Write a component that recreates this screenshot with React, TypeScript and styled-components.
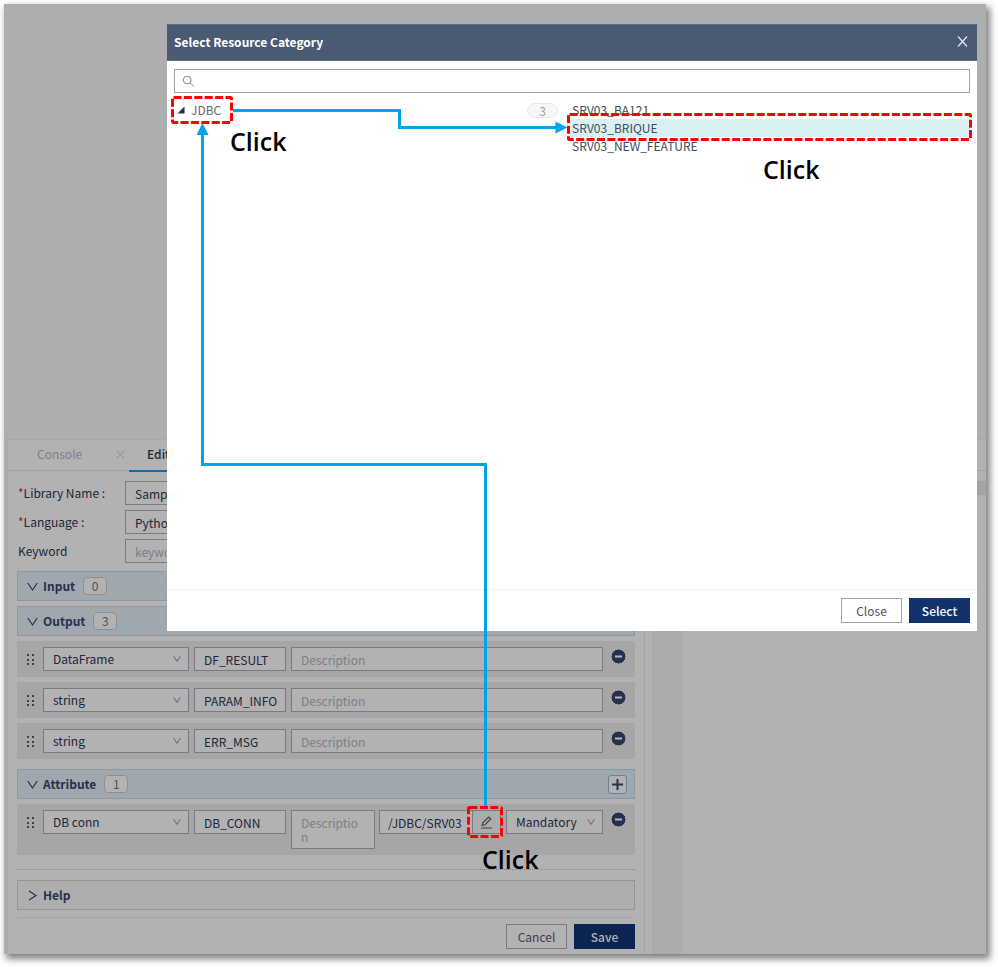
import React from "react";
import styled, { createGlobalStyle } from "styled-components";

const ink = "#202637";
const line = "#777b86";

const GlobalStyle = createGlobalStyle`
  *, *::before, *::after { box-sizing: border-box; }
  body { margin: 0; background: #fff; }
  body, button, input, select, textarea {
    font-family: "Noto Sans CJK KR", "Noto Sans", sans-serif;
    font-size: 12px;
    line-height: 18px;
    color: ${ink};
  }
  button { cursor: pointer; }
`;

const Page = styled.div`
  display: flex;
  min-height: 100vh;
  padding: 4px 12px 13px 4px;
`;

const Frame = styled.div`
  position: relative;
  flex: 1;
  display: flex;
  flex-direction: column;
  min-width: 0;
  background: #aeaeae;
  box-shadow: 3px 4px 7px 1px rgba(0, 0, 0, 0.5);
`;

const Canvas = styled.div`
  flex: 1;
  min-height: 435px;
`;

const Dock = styled.section`
  margin-left: 3px;
  background: #b2b2b2;
  border-top: 1px solid #a8a8a8;
  border-left: 1px solid #a8a8a8;
`;

const TabBar = styled.div`
  display: flex;
  height: 31px;
  border-bottom: 1px solid #a2a2a2;
`;

const Tab = styled.button<{ $active?: boolean }>`
  display: flex;
  align-items: center;
  justify-content: space-between;
  height: 32px;
  width: 121px;
  padding: 0 4px ${(p) => (p.$active ? 2 : 4)}px ${(p) => (p.$active ? 18 : 29)}px;
  border: 0;
  border-bottom: ${(p) => (p.$active ? "2px solid #0b6cb0" : "0")};
  background: none;
  font-weight: ${(p) => (p.$active ? 500 : 400)};
  color: ${(p) => (p.$active ? ink : "#7a808b")};
`;

const DockBody = styled.div`
  display: flex;
  align-items: stretch;
`;

const Editor = styled.div`
  flex: 0 0 637px;
  min-width: 0;
  padding: 10px 9px 5px 9px;
  border-right: 1px solid #a4a4a4;
`;

const Strip = styled.div`
  flex: 0 0 30px;
  margin-left: 7px;
  background: #ababab;
`;

const Side = styled.div`
  flex: 1;
  padding-top: 10px;
`;

const SideBar = styled.div`
  height: 14px;
  background: #a4a4a4;
`;

const Form = styled.div`
  display: flex;
  flex-direction: column;
  gap: 5px;
  margin-bottom: 8px;
`;

const FormRow = styled.div`
  display: flex;
  align-items: center;
`;

const Label = styled.label`
  flex: 0 0 108px;
  padding-left: 1px;
`;

const Star = styled.span`
  color: #a3142a;
`;

const Field = styled.input`
  flex: 1;
  min-width: 0;
  height: 24px;
  padding: 0 6px 0 9px;
  border: 1px solid ${line};
  border-radius: 0;
  background: #b2b2b2;
  outline: 0;
  &::placeholder { color: #7c7f87; opacity: 1; }
`;

const NameField = styled(Field)`
  flex: 0 0 92px;
`;

const PathField = styled(Field)`
  padding: 0 0 0 8px;
  border-right: 0;
`;

const Area = styled.textarea`
  flex: 0 0 84px;
  min-width: 0;
  height: 39px;
  padding: 5px 9px;
  border: 1px solid ${line};
  background: #b2b2b2;
  line-height: 14px;
  word-break: break-all;
  resize: none;
  outline: 0;
  overflow: hidden;
  &::placeholder { color: #7c7f87; opacity: 1; }
`;

const SelectBox = styled.span<{ $width: number }>`
  position: relative;
  flex: 0 0 ${(p) => p.$width}px;
  svg {
    position: absolute;
    right: 8px;
    top: 8px;
    pointer-events: none;
  }
`;

const Select = styled.select`
  display: block;
  width: 100%;
  height: 24px;
  padding: 0 9px;
  border: 1px solid ${line};
  border-radius: 0;
  background: #b2b2b2;
  appearance: none;
  outline: 0;
`;

const Section = styled.div<{ $plain?: boolean }>`
  display: flex;
  align-items: center;
  height: 30px;
  margin-bottom: 5px;
  padding: 0 7px 0 9px;
  border: 1px solid ${(p) => (p.$plain ? "#9295a0" : "#8c97a6")};
  background: ${(p) => (p.$plain ? "#aeaeae" : "#a0a8af")};
`;

const SectionToggle = styled.button`
  display: flex;
  align-items: center;
  gap: 5px;
  padding: 0;
  border: 0;
  background: none;
  font-weight: 700;
  color: #27304d;
`;

const Count = styled.span`
  min-width: 24px;
  height: 18px;
  margin-left: 8px;
  border: 1px solid #8f8f8f;
  border-radius: 4px;
  background: #b2b2b2;
  line-height: 16px;
  text-align: center;
  color: #4b5060;
`;

const AddButton = styled.button`
  display: flex;
  align-items: center;
  justify-content: center;
  width: 19px;
  height: 19px;
  margin-left: auto;
  padding: 0;
  border: 1px solid #6b8199;
  border-radius: 3px;
  background: #b2b2b2;
  color: #27304d;
`;

const Rows = styled.div`
  display: flex;
  flex-direction: column;
  gap: 5px;
  margin-bottom: 10px;
`;

const Row = styled.div`
  display: flex;
  align-items: flex-start;
  gap: 5px;
  padding: 6px 8px 6px 10px;
  background: #a6a6a6;
`;

const Grip = styled.svg`
  flex: 0 0 11px;
  height: 24px;
`;

const PathGroup = styled.span`
  display: flex;
  flex: 1;
  min-width: 0;
  margin-left: -1px;
`;

const EditButton = styled.button`
  display: flex;
  align-items: center;
  justify-content: center;
  flex: 0 0 29px;
  height: 24px;
  padding: 0;
  border: 1px solid ${line};
  background: #acacac;
`;

const RemoveButton = styled.button`
  flex: 0 0 17px;
  height: 17px;
  margin: 1px 0 0 2px;
  padding: 0;
  border: 0;
  background: none;
  svg { display: block; }
`;

const Divider = styled.hr<{ $dotted?: boolean }>`
  margin: ${(p) => (p.$dotted ? "14px 0 10px" : "7px 0 6px")};
  border: 0;
  border-top: 1px ${(p) => (p.$dotted ? "dotted #858585" : "solid #a5a5a5")};
`;

const Actions = styled.div`
  display: flex;
  justify-content: flex-end;
  gap: 7px;
`;

const ActionButton = styled.button<{ $kind: "dimPlain" | "dimPrimary" | "plain" | "primary" }>`
  width: 61px;
  height: 25px;
  padding: 0;
  border: 1px solid;
  ${(p) =>
    ({
      dimPlain: `border-color: ${line}; background: #b2b2b2; color: #3b4050;`,
      dimPrimary: "border-color: #0c2450; background: #0c2450; color: #b2b2b2; font-weight: 500;",
      plain: "border-color: #9ba1ae; background: #fff; color: #4a5263;",
      primary: "border-color: #12326b; background: #12326b; color: #fff; font-weight: 500;",
    })[p.$kind]}
`;

const Modal = styled.div`
  position: absolute;
  top: 20px;
  left: 163px;
  right: 9px;
  display: flex;
  flex-direction: column;
  height: 607px;
  background: #fff;
`;

const ModalHeader = styled.header`
  display: flex;
  align-items: center;
  justify-content: space-between;
  height: 37px;
  padding: 0 9px 2px 7px;
  border: 1px solid #5f6e87;
  border-width: 1px 0;
  background: #4a5a72;
`;

const ModalTitle = styled.h2`
  margin: 0;
  font-size: 12px;
  line-height: 18px;
  font-weight: 700;
  color: #fff;
`;

const CloseIconButton = styled.button`
  display: flex;
  padding: 0;
  border: 0;
  background: none;
  color: #e6e9ee;
`;

const SearchBox = styled.label`
  display: flex;
  align-items: center;
  gap: 6px;
  height: 24px;
  margin: 8px 7px 8px;
  padding: 0 7px;
  border: 1px solid #9ba1ae;
`;

const SearchInput = styled.input`
  flex: 1;
  min-width: 0;
  border: 0;
  padding: 0;
  outline: 0;
  background: none;
`;

const Columns = styled.div`
  flex: 1;
  display: grid;
  grid-template-columns: 33fr 34fr;
  gap: 8px;
  padding: 0 7px;
  align-items: start;
`;

const TreeNode = styled.button`
  display: flex;
  align-items: center;
  width: 100%;
  height: 18px;
  padding: 0 4px 0 3px;
  border: 0;
  background: none;
  color: #64676e;
`;

const NodeName = styled.span`
  flex: 1;
  margin-left: 6px;
  text-align: left;
`;

const Pill = styled.span`
  width: 31px;
  height: 15px;
  border: 1px solid #e8e8e8;
  border-radius: 8px;
  background: #f7f7f7;
  line-height: 13px;
  text-align: center;
  color: #9a9fa8;
`;

const Items = styled.ul`
  margin: 0;
  padding: 0;
  list-style: none;
`;

const Item = styled.li<{ $selected?: boolean }>`
  height: 18px;
  padding-left: 2px;
  background: ${(p) => (p.$selected ? "#d8f0f2" : "none")};
  line-height: 18px;
  color: #434b5c;
`;

const ModalFooter = styled.footer`
  padding: 8px 7px;
  border-top: 1px solid #f0f0f0;
`;

const Overlay = styled.svg`
  position: absolute;
  top: -4px;
  left: -4px;
  pointer-events: none;
`;

const Callout = styled.span<{ $x: number; $y: number }>`
  position: absolute;
  left: ${(p) => p.$x}px;
  top: ${(p) => p.$y}px;
  font-family: "Open Sans", "Noto Sans", sans-serif;
  font-size: 25px;
  line-height: 32px;
  font-weight: 600;
  color: #000;
`;

const Chevron = () => (
  <svg width="8" height="8" viewBox="0 0 10 10" fill="none" stroke="#6c6f78" strokeWidth="1.3">
    <path d="M0.8 1.5 5 8 9.2 1.5" />
  </svg>
);

const SectionIcon = ({ closed }: { closed?: boolean }) => (
  <svg width="11" height="11" viewBox="0 0 11 11" fill="none" stroke="#27304d" strokeWidth="1.2">
    <path d={closed ? "M2 1 9 5.5 2 10" : "M0.8 2 5.5 9 10.2 2"} />
  </svg>
);

const GripIcon = () => (
  <Grip viewBox="0 0 11 24" fill="#3c3f47">
    {[7, 12, 16].map((y) => (
      <React.Fragment key={y}>
        <rect x="0" y={y} width="2" height="2" />
        <rect x="5" y={y} width="2" height="2" />
      </React.Fragment>
    ))}
  </Grip>
);

const Remove = () => (
  <RemoveButton aria-label="Remove">
    <svg width="17" height="17" viewBox="0 0 17 17">
      <circle cx="8.5" cy="8.5" r="7.5" fill="#27304d" stroke="#b4b4b4" />
      <path d="M5 8.5h7" stroke="#b8b8b8" strokeWidth="2" />
    </svg>
  </RemoveButton>
);

const DropDown = ({ value, width, label }: { value: string; width: number; label: string }) => (
  <SelectBox $width={width}>
    <Select aria-label={label} defaultValue={value}>
      <option>{value}</option>
    </Select>
    <Chevron />
  </SelectBox>
);

const SectionHeader = ({ name, count, add }: { name: string; count: number; add?: boolean }) => (
  <Section>
    <SectionToggle aria-expanded>
      <SectionIcon />
      {name}
    </SectionToggle>
    <Count>{count}</Count>
    {add && (
      <AddButton aria-label="Add attribute">
        <svg width="11" height="11" viewBox="0 0 11 11" stroke="currentColor" strokeWidth="2">
          <path d="M5.5 0v11M0 5.5h11" />
        </svg>
      </AddButton>
    )}
  </Section>
);

const outputs = [
  { type: "DataFrame", name: "DF_RESULT" },
  { type: "string", name: "PARAM_INFO" },
  { type: "string", name: "ERR_MSG" },
];

const resources = ["SRV03_BA121", "SRV03_BRIQUE", "SRV03_NEW_FEATURE"];

export default function App() {
  return (
    <Page>
      <GlobalStyle />
      <Frame>
        <Canvas />
        <Dock>
          <TabBar>
            <Tab>
              Console
              <svg width="9" height="9" viewBox="0 0 9 9" stroke="#888c94">
                <path d="M0.5 0.5l8 8M8.5 0.5l-8 8" />
              </svg>
            </Tab>
            <Tab $active>Edit</Tab>
          </TabBar>
          <DockBody>
            <Editor>
              <Form>
                <FormRow>
                  <Label htmlFor="library"><Star>*</Star>Library Name :</Label>
                  <Field id="library" defaultValue="Sample" />
                </FormRow>
                <FormRow>
                  <Label htmlFor="language"><Star>*</Star>Language :</Label>
                  <Field id="language" defaultValue="Python" />
                </FormRow>
                <FormRow>
                  <Label htmlFor="keyword">Keyword</Label>
                  <Field id="keyword" placeholder="keyword" />
                </FormRow>
              </Form>
              <SectionHeader name="Input" count={0} />
              <SectionHeader name="Output" count={3} />
              <Rows>
                {outputs.map((o) => (
                  <Row key={o.name}>
                    <GripIcon />
                    <DropDown value={o.type} width={146} label="Type" />
                    <NameField aria-label="Name" defaultValue={o.name} />
                    <Field aria-label="Description" placeholder="Description" />
                    <Remove />
                  </Row>
                ))}
              </Rows>
              <SectionHeader name="Attribute" count={1} add />
              <Row>
                <GripIcon />
                <DropDown value="DB conn" width={146} label="Type" />
                <NameField aria-label="Name" defaultValue="DB_CONN" />
                <Area aria-label="Description" placeholder="Description" />
                <PathGroup>
                  <PathField aria-label="Resource path" defaultValue="/JDBC/SRV03" />
                  <EditButton aria-label="Edit resource">
                    <svg width="13" height="13" viewBox="0 0 13 13" fill="none" stroke="#3c404b" strokeWidth="1.2">
                      <path d="M1 12h11M2.2 9.5l.6-2.7L8.7 1l2 2-5.8 5.8z" />
                    </svg>
                  </EditButton>
                </PathGroup>
                <DropDown value="Mandatory" width={97} label="Requirement" />
                <Remove />
              </Row>
              <Divider $dotted />
              <Section $plain>
                <SectionToggle aria-expanded={false}>
                  <SectionIcon closed />
                  Help
                </SectionToggle>
              </Section>
              <Divider />
              <Actions>
                <ActionButton $kind="dimPlain">Cancel</ActionButton>
                <ActionButton $kind="dimPrimary">Save</ActionButton>
              </Actions>
            </Editor>
            <Strip />
            <Side>
              <SideBar />
            </Side>
          </DockBody>
        </Dock>

        <Modal role="dialog" aria-labelledby="modal-title">
          <ModalHeader>
            <ModalTitle id="modal-title">Select Resource Category</ModalTitle>
            <CloseIconButton aria-label="Close dialog">
              <svg width="11" height="11" viewBox="0 0 11 11" stroke="currentColor" strokeWidth="1.2">
                <path d="M1 0.5l9 10M10 0.5l-9 10" />
              </svg>
            </CloseIconButton>
          </ModalHeader>
          <SearchBox>
            <svg width="13" height="13" viewBox="0 0 13 13" fill="none" stroke="#85888e">
              <circle cx="5.2" cy="5" r="3.9" />
              <path d="M8 7.8l4 3.7" />
            </svg>
            <SearchInput type="search" aria-label="Search" />
          </SearchBox>
          <Columns>
            <TreeNode>
              <svg width="8" height="8" viewBox="0 0 8 8">
                <path d="M7.5 0.5v7h-7z" fill="#27304d" />
              </svg>
              <NodeName>JDBC</NodeName>
              <Pill>3</Pill>
            </TreeNode>
            <Items>
              {resources.map((r) => (
                <Item key={r} $selected={r === "SRV03_BRIQUE"}>{r}</Item>
              ))}
            </Items>
          </Columns>
          <ModalFooter>
            <Actions>
              <ActionButton $kind="plain">Close</ActionButton>
              <ActionButton $kind="primary">Select</ActionButton>
            </Actions>
          </ModalFooter>
        </Modal>

        <Overlay width="998" height="963" viewBox="0 0 998 963" fill="none" aria-hidden="true">
          <g stroke="#00a2e8" strokeWidth="3">
            <path d="M233 110.500H399.500V127.500H557" />
            <path d="M485.500 806V464.500H202.500V134" />
          </g>
          <g fill="#00a2e8">
            <path d="M555.500 121.500v12l12-6z" />
            <path d="M196.500 135h12l-6-12z" />
          </g>
          <g stroke="#ff0000" strokeWidth="3" strokeDasharray="8 2.400">
            <rect x="172.500" y="97.500" width="59" height="25" rx="1" />
            <rect x="568.500" y="114.500" width="402" height="25" rx="1" />
            <rect x="468.500" y="807.500" width="33" height="29" rx="1" />
          </g>
        </Overlay>
        <Callout $x={226} $y={121}>Click</Callout>
        <Callout $x={759} $y={149}>Click</Callout>
        <Callout $x={478} $y={839}>Click</Callout>
      </Frame>
    </Page>
  );
}
